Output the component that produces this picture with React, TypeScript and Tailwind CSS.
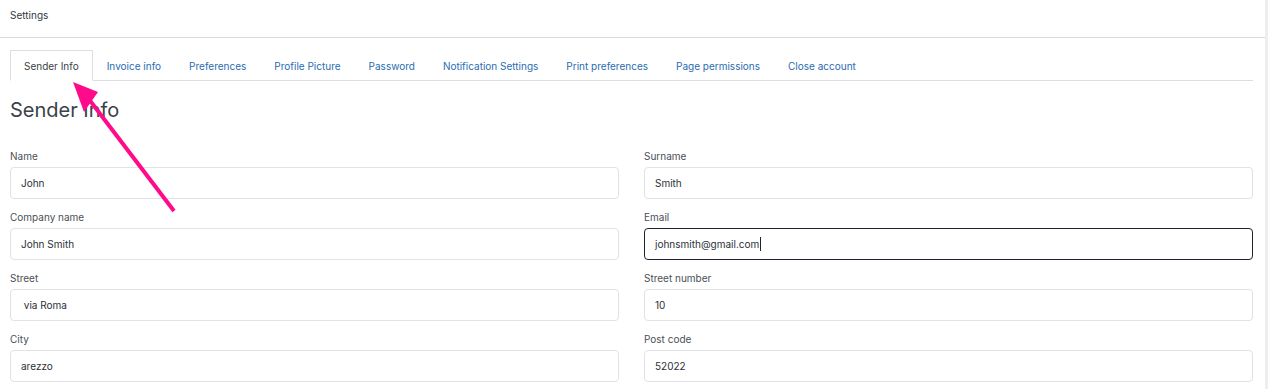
import { type FC } from "react";

const TABS = [
  "Sender Info",
  "Invoice info",
  "Preferences",
  "Profile Picture",
  "Password",
  "Notification Settings",
  "Print preferences",
  "Page permissions",
  "Close account",
];

const FIELDS: { label: string; value: string; focused?: boolean }[] = [
  { label: "Name", value: "John" },
  { label: "Surname", value: "Smith" },
  { label: "Company name", value: "John Smith" },
  { label: "Email", value: "johnsmith@gmail.com", focused: true },
  { label: "Street", value: " via Roma" },
  { label: "Street number", value: "10" },
  { label: "City", value: "arezzo" },
  { label: "Post code", value: "52022" },
];

const Field: FC<{ label: string; value: string; focused?: boolean }> = ({ label, value, focused }) => (
  <div className="flex flex-col">
    <label className="text-[10px] leading-[15px] text-[#4a4f56]">{label}</label>
    <div
      className={`mt-[3px] h-[32px] rounded-[4px] border bg-white flex items-center pl-[10px] text-[10px] text-[#2b3036] whitespace-pre ${
        focused ? "border-[#1e2330]" : "border-[#dfe2e6]"
      }`}
    >
      {value}
      {focused && <span className="inline-block w-px h-[14px] bg-[#1e2330] ml-px" />}
    </div>
  </div>
);

export default function App() {
  return (
    <div
      className="relative flex h-[389px] w-full bg-white overflow-hidden"
      style={{ fontFamily: "Inter, 'Noto Sans', sans-serif" }}
    >
      <div className="flex-1 min-w-0">
        {/* header */}
        <div className="h-[38px] border-b border-[#d9dadc] pl-[10px] pt-[8px] text-[10px] leading-[14px] text-[#33373d]">
          Settings
        </div>

        <div className="pl-[10px] pr-[12px]">
          {/* tabs */}
          <div className="mt-[12px] flex border-b border-[#dcdee1]">
            {TABS.map((t, i) =>
              i === 0 ? (
                <div
                  key={t}
                  className="h-[31px] -mb-px px-[13px] pt-px flex items-center border border-b-white border-[#dcdee1] bg-white text-[10px] text-[#3a3f46]"
                >
                  {t}
                </div>
              ) : (
                <div key={t} className="h-[30px] px-[14px] pt-[2px] flex items-center text-[10px] text-[#2a6cb0]">
                  {t}
                </div>
              )
            )}
          </div>

          <h1 className="mt-[15px] text-[20px] leading-[28px] text-[#3b414a]">Sender Info</h1>

          {/* form */}
          <div className="mt-[25px] grid grid-cols-2 gap-x-[25px] gap-y-[11px]">
            {FIELDS.map((f) => (
              <Field key={f.label} {...f} />
            ))}
          </div>
        </div>
      </div>

      {/* scrollbar strip */}
      <div className="w-[3px] bg-[#eceef0]" />

      {/* annotation arrow */}
      <svg className="absolute left-0 top-0 pointer-events-none" width="1268" height="389">
        <line x1="174" y1="211" x2="88" y2="98" stroke="#ff0a8a" strokeWidth="4" />
        <polygon points="73,82 98,92 84,112" fill="#ff0a8a" />
      </svg>
    </div>
  );
}
